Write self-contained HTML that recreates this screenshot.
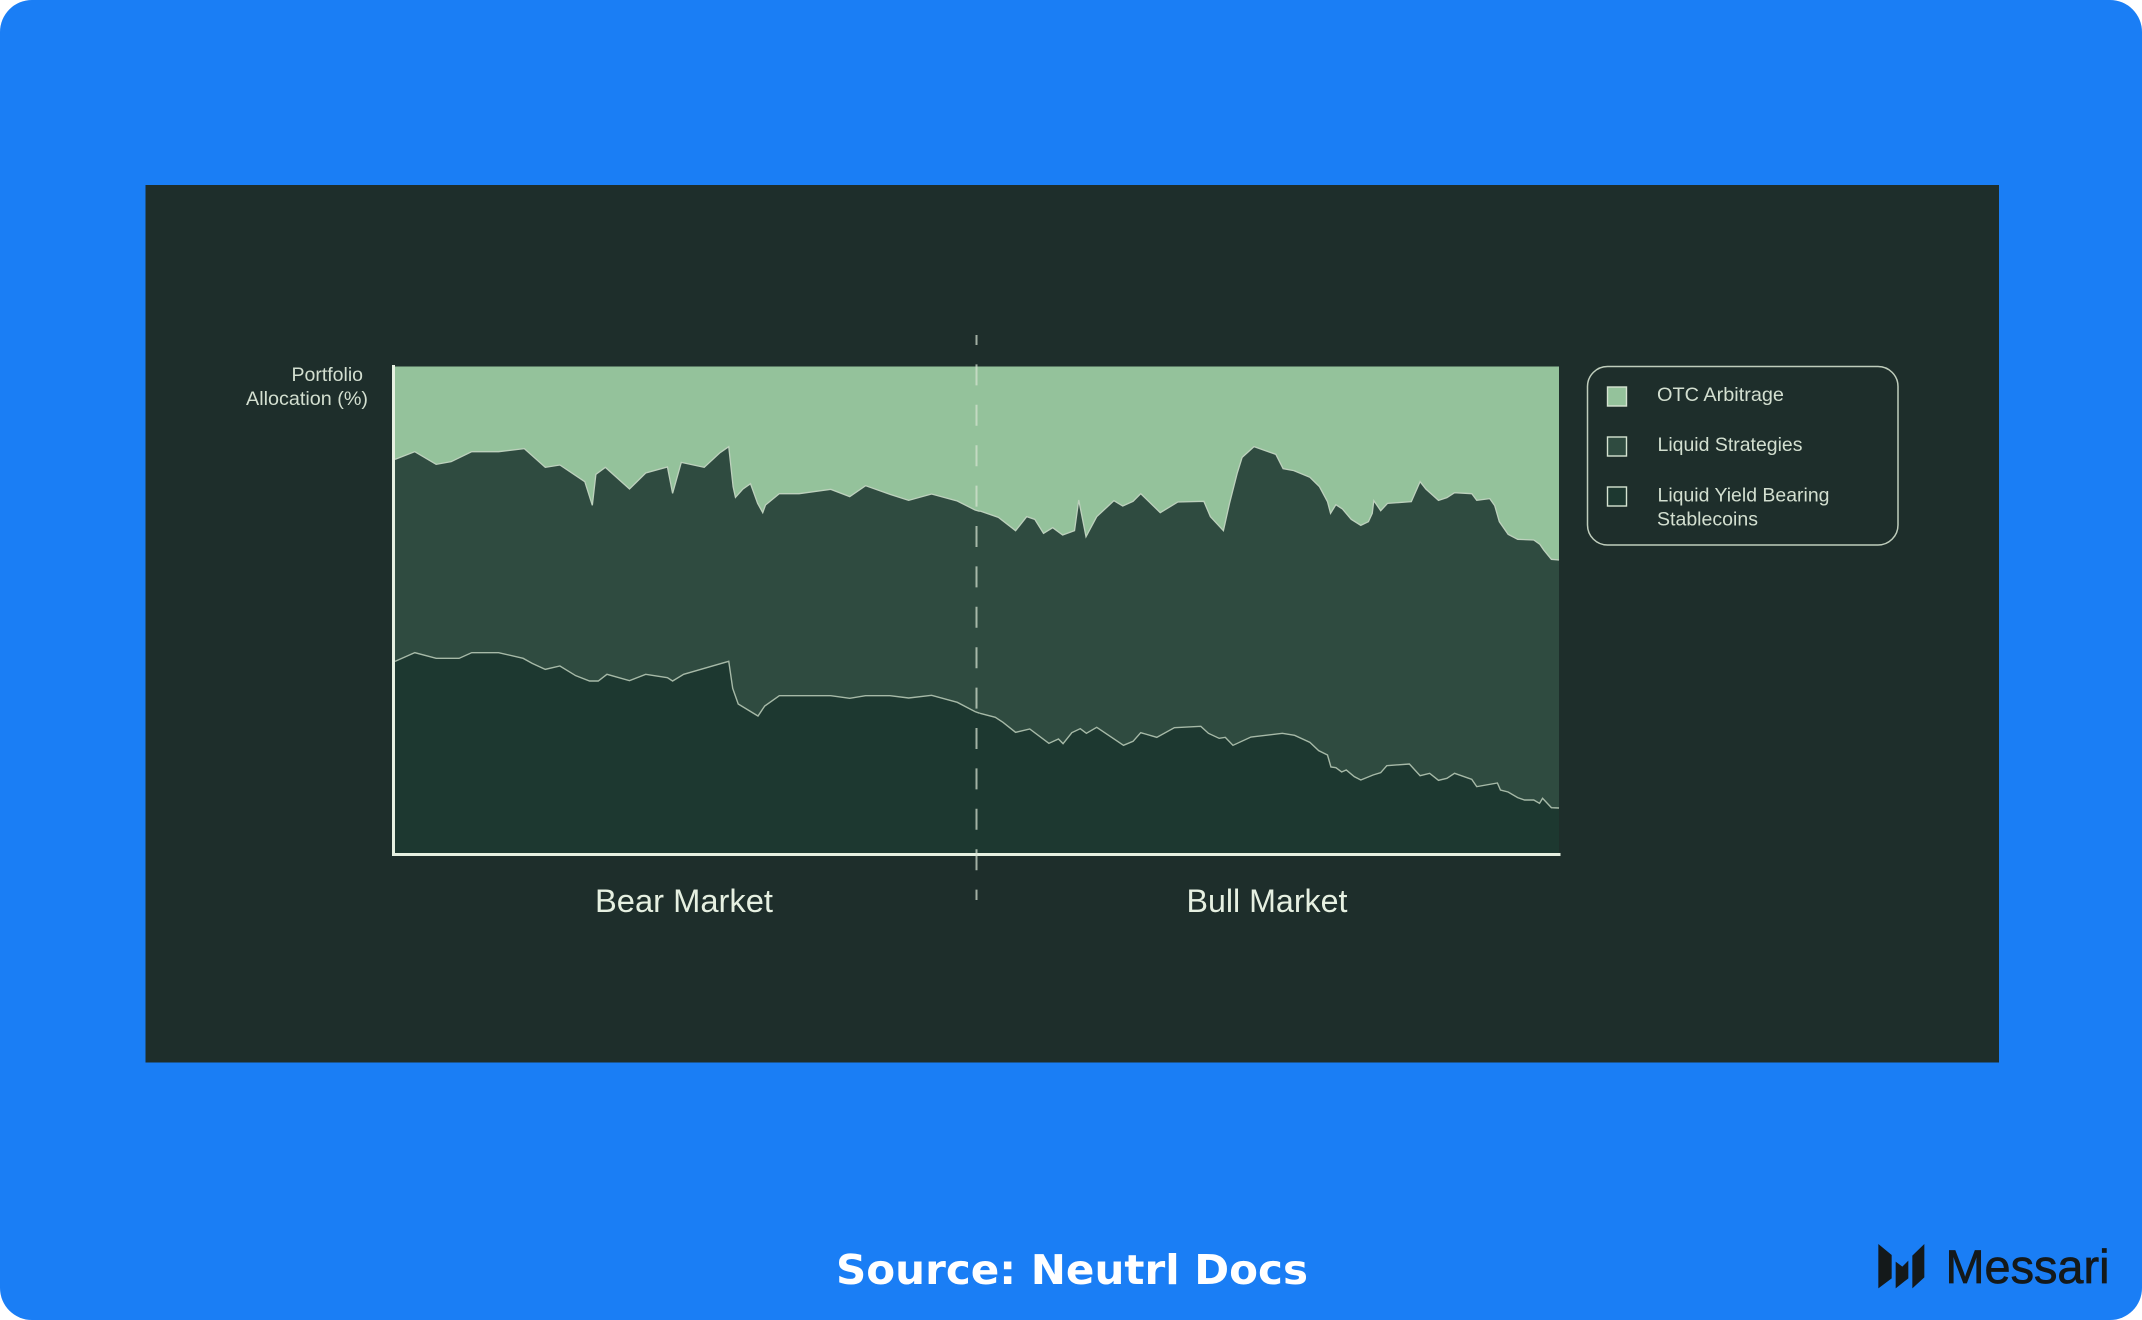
<!DOCTYPE html>
<html lang="en">
<head>
<meta charset="utf-8">
<title>Portfolio Allocation</title>
<style>
html,body{margin:0;padding:0;background:#fff;width:2142px;height:1320px;overflow:hidden}
svg{display:block}
text{font-family:"Liberation Sans",sans-serif}
</style>
</head>
<body>
<svg width="2142" height="1320" viewBox="0 0 2142 1320" xmlns="http://www.w3.org/2000/svg">
  <rect x="0" y="0" width="2142" height="1320" rx="32" ry="32" fill="#1a7ef5"/>
  <rect x="145.5" y="185" width="1853.5" height="877.5" fill="#1e2e2b"/>

  <rect x="395" y="366.5" width="1164" height="488" fill="#94c29b"/>

  <g transform="translate(380,340) scale(.3954,.33333)">
    <polygon fill="#2f4b40" points="38,358 88,335 142,373 180,365 232,335 300,335 365,326 418,382 455,375 518,425 537,496 546,403 570,382 631,447 672,399 727,381 740,460 762,367 820,382 860,338 882,320 893,440 899,472 918,447 937,431 955,490 968,518 975,495 1010,461 1060,461 1140,448 1188,470 1228,437 1290,463 1337,481 1395,462 1460,483 1505,510 1517,514 1525,516 1525,1542 38,1542"/>
    <polygon fill="#1d3830" points="38,964 88,938 142,955 200,955 232,938 300,938 362,955 385,970 418,988 455,978 495,1007 530,1023 552,1023 574,1003 631,1022 672,1003 727,1013 740,1023 768,1003 882,964 892,1045 906,1092 956,1128 973,1098 1010,1067 1140,1067 1188,1075 1228,1067 1290,1067 1337,1074 1395,1066 1460,1087 1505,1115 1517,1120 1525,1122 1525,1542 38,1542"/>
    <polyline fill="none" stroke="#bdd1bd" stroke-width="1.3" vector-effect="non-scaling-stroke" points="38,358 88,335 142,373 180,365 232,335 300,335 365,326 418,382 455,375 518,425 537,496 546,403 570,382 631,447 672,399 727,381 740,460 762,367 820,382 860,338 882,320 893,440 899,472 918,447 937,431 955,490 968,518 975,495 1010,461 1060,461 1140,448 1188,470 1228,437 1290,463 1337,481 1395,462 1460,483 1505,510 1517,514"/>
    <polyline fill="none" stroke="#a6b9a7" stroke-width="1.4" vector-effect="non-scaling-stroke" points="38,964 88,938 142,955 200,955 232,938 300,938 362,955 385,970 418,988 455,978 495,1007 530,1023 552,1023 574,1003 631,1022 672,1003 727,1013 740,1023 768,1003 882,964 892,1045 906,1092 956,1128 973,1098 1010,1067 1140,1067 1188,1075 1228,1067 1290,1067 1337,1074 1395,1066 1460,1087 1505,1115 1517,1120"/>
  </g>

  <g transform="translate(980,340) scale(.3827,.33333)">
    <polygon fill="#2f4b40" points="0,513 48,532 93,572 122,530 143,538 166,580 190,563 216,585 247,572 258,480 277,590 305,530 350,482 373,498 400,484 420,461 471,518 517,486 585,484 602,530 636,572 652,490 672,400 685,352 716,320 773,343 792,386 820,392 862,412 887,440 908,485 916,520 930,494 947,507 970,538 995,556 1015,545 1025,520 1029,482 1047,512 1065,490 1127,485 1150,425 1165,447 1198,481 1220,473 1240,458 1285,461 1298,481 1332,476 1345,497 1357,545 1380,583 1405,598 1447,600 1463,613 1473,630 1493,658 1513,660 1513,1542 0,1542"/>
    <polygon fill="#1d3830" points="0,1120 40,1132 60,1147 93,1177 130,1167 180,1210 205,1197 217,1211 240,1178 262,1166 278,1180 305,1162 375,1216 400,1204 420,1178 462,1192 508,1163 577,1159 597,1180 625,1195 641,1192 661,1216 708,1191 790,1180 822,1186 862,1207 885,1232 908,1245 917,1281 930,1283 945,1296 957,1290 978,1310 995,1320 1027,1305 1047,1298 1063,1277 1122,1272 1150,1307 1175,1300 1198,1321 1220,1315 1240,1300 1285,1318 1298,1340 1352,1329 1360,1350 1380,1356 1405,1373 1423,1380 1447,1380 1462,1390 1470,1375 1493,1403 1513,1404 1513,1542 0,1542"/>
    <polyline fill="none" stroke="#bdd1bd" stroke-width="1.3" vector-effect="non-scaling-stroke" points="0,513 48,532 93,572 122,530 143,538 166,580 190,563 216,585 247,572 258,480 277,590 305,530 350,482 373,498 400,484 420,461 471,518 517,486 585,484 602,530 636,572 652,490 672,400 685,352 716,320 773,343 792,386 820,392 862,412 887,440 908,485 916,520 930,494 947,507 970,538 995,556 1015,545 1025,520 1029,482 1047,512 1065,490 1127,485 1150,425 1165,447 1198,481 1220,473 1240,458 1285,461 1298,481 1332,476 1345,497 1357,545 1380,583 1405,598 1447,600 1463,613 1473,630 1493,658 1513,660"/>
    <polyline fill="none" stroke="#a6b9a7" stroke-width="1.4" vector-effect="non-scaling-stroke" points="0,1120 40,1132 60,1147 93,1177 130,1167 180,1210 205,1197 217,1211 240,1178 262,1166 278,1180 305,1162 375,1216 400,1204 420,1178 462,1192 508,1163 577,1159 597,1180 625,1195 641,1192 661,1216 708,1191 790,1180 822,1186 862,1207 885,1232 908,1245 917,1281 930,1283 945,1296 957,1290 978,1310 995,1320 1027,1305 1047,1298 1063,1277 1122,1272 1150,1307 1175,1300 1198,1321 1220,1315 1240,1300 1285,1318 1298,1340 1352,1329 1360,1350 1380,1356 1405,1373 1423,1380 1447,1380 1462,1390 1470,1375 1493,1403 1513,1404"/>
  </g>

  <!-- axes -->
  <rect x="392" y="365" width="3" height="491" fill="#e6f0e1"/>
  <rect x="392" y="853" width="1168.5" height="3" fill="#e6f0e1"/>

  <!-- divider -->
  <line x1="976.5" y1="335" x2="976.5" y2="900" stroke="#d5e2d1" stroke-opacity=".72" stroke-width="2" stroke-dasharray="21 19.4" stroke-dashoffset="11"/>

  <!-- y label -->
  <text x="291.5" y="381" font-size="19.5" fill="#d3dfd0" textLength="71.5" lengthAdjust="spacingAndGlyphs">Portfolio</text>
  <text x="246" y="405" font-size="19.5" fill="#d3dfd0" textLength="122" lengthAdjust="spacingAndGlyphs">Allocation (%)</text>

  <!-- x labels -->
  <text x="595" y="912" font-size="32" fill="#e6f0e1" textLength="178" lengthAdjust="spacingAndGlyphs">Bear Market</text>
  <text x="1186.5" y="912" font-size="32" fill="#e6f0e1" textLength="161" lengthAdjust="spacingAndGlyphs">Bull Market</text>

  <!-- legend -->
  <rect x="1587.5" y="366.5" width="310.5" height="178.5" rx="20" ry="20" fill="none" stroke="#bfcdbc" stroke-width="1.5"/>
  <rect x="1607.5" y="387" width="19" height="19" fill="#94c29b" stroke="#d5e3d1" stroke-width="1.4"/>
  <rect x="1607.5" y="437" width="19" height="19" fill="#2f4b40" stroke="#d5e3d1" stroke-width="1.4"/>
  <rect x="1607.5" y="487" width="19" height="19" fill="#1d3830" stroke="#d5e3d1" stroke-width="1.4"/>
  <g font-size="19.5" fill="#d3dfd0">
    <text x="1657" y="401" textLength="127" lengthAdjust="spacingAndGlyphs">OTC Arbitrage</text>
    <text x="1657.5" y="451" textLength="145" lengthAdjust="spacingAndGlyphs">Liquid Strategies</text>
    <text x="1657.5" y="501.5" textLength="172" lengthAdjust="spacingAndGlyphs">Liquid Yield Bearing</text>
    <text x="1657" y="525.5" textLength="101" lengthAdjust="spacingAndGlyphs">Stablecoins</text>
  </g>

  <!-- source -->
  <text x="836" y="1284" font-size="41" font-weight="700" fill="#ffffff" style="font-family:'DejaVu Sans',sans-serif" textLength="472" lengthAdjust="spacingAndGlyphs">Source: Neutrl Docs</text>

  <!-- Messari logo -->
  <g transform="translate(1840,1220) scale(.33333)" fill="#14191a">
    <polygon points="115,72 155,105 155,175 115,205"/>
    <polygon points="167,125 187,140 205,122 205,175 167,205"/>
    <polygon points="217,107 253,72 253,172 217,205"/>
  </g>
  <text x="1945.5" y="1283" font-size="47" fill="#14191a" stroke="#14191a" stroke-width=".7" textLength="164" lengthAdjust="spacingAndGlyphs">Messari</text>
</svg>
</body>
</html>
